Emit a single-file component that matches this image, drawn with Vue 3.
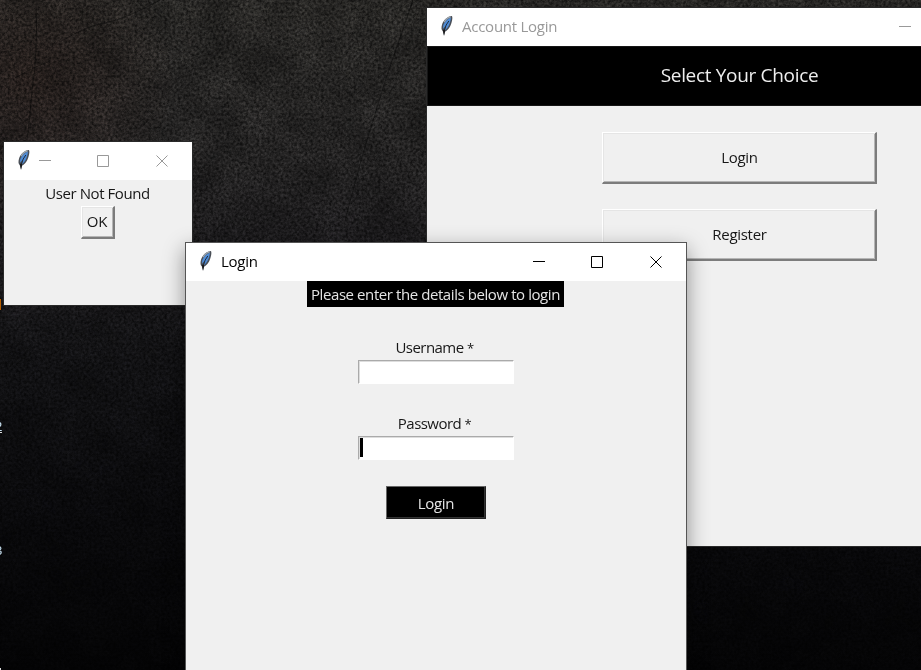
<script setup>
import { h } from 'vue'

const Feather = () => h('svg', { class: 'feather', width: 14, height: 22, viewBox: '0 0 14 22' }, [
  h('path', { d: 'M11.9 1C7.5 1.2 3.3 5.2 2 9.8C1.2 12.6 1.3 15.2 2.8 16.2L4 20.8L5 16.7C8.5 15.2 10.7 11 11.7 7C12.4 4.5 12.7 2 11.9 1Z', fill: '#4a4f57' }),
  h('path', { d: 'M11 2.7C7.5 3.3 4.5 7 3.2 10.5L3 13.8L5.7 10.7L5 15.2C8 13.1 10.3 8.5 11 2.7Z', fill: '#4f8bd4' }),
  h('path', { d: 'M10.7 1.8C7.4 2.5 5.2 5 4.2 7.2', fill: 'none', stroke: '#a0a8b0', 'stroke-width': 1.2 }),
  h('path', { d: 'M8.8 6L6.2 10L4.3 15.5', fill: 'none', stroke: '#16202c', 'stroke-width': .9 }),
  h('path', { d: 'M2.9 14.5L4 20.8L5.2 15.5Z', fill: '#151515' }),
])

const Controls = () => h('div', { class: 'controls' }, [
  'M22 18.5H34', 'M22.5 13.5H33.5V24.5H22.5Z', 'M23.5 13.5L34.5 24.5M34.5 13.5L23.5 24.5',
].map((d) => h('svg', { width: 58, height: 38, viewBox: '0 0 58 38' }, [
  h('path', { d: d, fill: 'none', stroke: 'currentColor', 'stroke-width': 1 }),
])))
</script>

<template>
  <main class="desktop">
    <svg class="wallpaper" width="921" height="670">
      <defs>
        <filter id="grain" x="0" y="0" width="100%" height="100%" color-interpolation-filters="sRGB">
          <feTurbulence type="fractalNoise" baseFrequency="0.37" numOctaves="4" seed="8" />
          <feColorMatrix type="matrix" values="1.6 .5 0 0 -.55  1.6 .5 0 0 -.55  1.6 .5 0 0 -.55  0 0 0 0 1" />
        </filter>
        <filter id="clouds" x="0" y="0" width="100%" height="100%" color-interpolation-filters="sRGB">
          <feTurbulence type="fractalNoise" baseFrequency="0.025" numOctaves="3" seed="21" />
          <feColorMatrix type="matrix" values="1.3 0 0 0 -.15  1.3 0 0 0 -.15  1.3 0 0 0 -.15  0 0 0 0 1" />
        </filter>
        <linearGradient id="shade" x2="0" y2="1">
          <stop offset="0" stop-color="#262523" />
          <stop offset=".24" stop-color="#222121" />
          <stop offset=".38" stop-color="#1a191b" />
          <stop offset=".55" stop-color="#101012" />
          <stop offset=".78" stop-color="#08080a" />
          <stop offset="1" stop-color="#030304" />
        </linearGradient>
        <radialGradient id="warm">
          <stop offset="0" stop-color="#2a1009" stop-opacity=".25" />
          <stop offset="1" stop-color="#2a1009" stop-opacity="0" />
        </radialGradient>
      </defs>
      <rect width="921" height="670" fill="url(#shade)" />
      <ellipse cx="30" cy="80" rx="150" ry="150" fill="url(#warm)" />
      <rect class="clouds" width="921" height="670" filter="url(#clouds)" />
      <rect class="grain" width="921" height="670" filter="url(#grain)" />
      <path class="scratch" d="M413 0C398 45 388 70 380 98C370 130 361 158 344 225M36 0Q38 55 32 90Q30 118 27 141M15 78Q34 67 50 61M60 42Q88 25 105 23Q128 18 160 0" />
    </svg>

    <span class="edge-mark orange"></span>
    <span class="edge-number second">2</span>
    <span class="edge-number third">3</span>
    <span class="edge-mark bottom"></span>

    <section class="window account inactive">
      <header class="titlebar"><Feather /><h1>Account Login</h1><Controls /></header>
      <div class="banner"><span>Select Your Choice</span></div>
      <div class="choices">
        <button class="raised">Login</button>
        <button class="raised">Register</button>
      </div>
    </section>

    <section class="window notice inactive">
      <header class="titlebar"><Feather /><Controls /></header>
      <p class="message">User Not Found</p>
      <button class="raised ok">OK</button>
    </section>

    <section class="window login">
      <header class="titlebar"><Feather /><h1>Login</h1><Controls /></header>
      <form class="form" @submit.prevent>
        <p class="instructions"><span>Please enter the details below to login</span></p>
        <label class="field"><span>Username <small>*</small></span><input type="text" /></label>
        <label class="field password"><span>Password <small>*</small></span><span class="entry"><i></i></span></label>
        <button class="submit">Login</button>
      </form>
    </section>
  </main>
</template>

<style>
body { margin: 0; overflow: hidden; }
.feather { flex: none; margin: 7px 0 0 13px; }
.controls { display: flex; margin-left: auto; flex: none; padding-right: 1px; }
.controls svg { display: block; flex: none; }
</style>

<style scoped>
.desktop { position: relative; width: 921px; height: 670px; overflow: hidden; font: 15px/20px "Open Sans", "Noto Sans", sans-serif; color: #171717; background: #111; }
.wallpaper { display: block; }
.clouds { mix-blend-mode: overlay; opacity: .25; }
.grain { mix-blend-mode: overlay; opacity: .5; }
.scratch { fill: none; stroke: #080808; stroke-width: 1; opacity: .5; }
.window { position: absolute; display: flex; flex-direction: column; align-items: stretch; background: #f0f0f0; box-sizing: border-box; }
.account { left: 427px; top: 8px; width: 625px; height: 538px; box-shadow: 0 0 0 1px #292929; }
.notice { left: 4px; top: 142px; width: 188px; height: 163px; box-shadow: 0 0 0 1px #292929; }
.login { left: 186px; top: 243px; width: 500px; height: 500px; box-shadow: 0 0 0 1px #555, 0 7px 20px 1px rgba(0, 0, 0, .42); }
.titlebar { display: flex; height: 38px; flex: none; background: #fff; color: #000; }
.inactive .titlebar { color: #999; }
h1 { margin: 8px 0 0 8px; font: 400 15px/20px "Open Sans", sans-serif; letter-spacing: -.25px; white-space: nowrap; }
.login .controls, .account .controls { padding-right: 0.5px; margin-right: .5px; }
.notice .controls { margin-left: -14px; }
.banner { height: 60px; box-sizing: border-box; border: 1px solid #161616; padding-bottom: 2px; background: #000; color: #eee; display: flex; align-items: center; justify-content: center; font-size: 19px; letter-spacing: -.32px; }
.choices { display: flex; flex-direction: column; align-items: center; gap: 25px; padding-top: 26px; }
button { font: inherit; color: inherit; padding: 0; margin: 0; border-radius: 0; box-sizing: border-box; letter-spacing: -.3px; }
.raised { width: 275px; height: 52px; background: #f0f0f0; border-style: solid; border-width: 1px 2px 2px 1px; border-color: #fff #7c7c7c #7c7c7c #fff; box-shadow: inset 1px 1px #e5e5e5, inset -1px -1px #b5b5b5; }
.choices .raised { padding: 0 0 1px 1px; }
.message { margin: 3px 1px 3px 0; height: 20px; text-align: center; letter-spacing: -.42px; }
.raised.ok { width: 34px; height: 33px; padding-bottom: 2px; align-self: center; margin-right: 1px; }
.form { display: flex; flex-direction: column; align-items: center; }
.instructions { margin: 0 1px 0 0; width: 257px; height: 26px; line-height: 27px; background: #000; color: #e4e4e4; text-align: center; white-space: nowrap; letter-spacing: -.42px; }
.field { display: flex; flex-direction: column; align-items: center; margin-top: 30px; letter-spacing: -.54px; }
.field > span:first-child { height: 23px; line-height: 20px; margin-right: 3px; }
small { font-size: 13px; line-height: 1; }
.password { margin-top: 29px; }
input, .entry { box-sizing: border-box; width: 156px; height: 24px; background: #fff; border: 1px solid #fff; border-top-color: #aaa; border-left-color: #aaa; box-shadow: inset 1px 1px #ddd; outline: none; padding: 0; margin: 0; }
.entry { display: block; }
.entry i { display: block; width: 3px; height: 19px; margin: 1px; background: #000; }
.submit { width: 100px; height: 33px; margin-top: 26px; color: #e5e5e5; background: #000; border: 1px solid #666; border-right-color: #222; border-bottom-color: #222; box-shadow: inset -1px -1px #333; }
.edge-mark { position: absolute; left: 0; width: 1px; height: 11px; background: #b65d00; }
.orange { top: 299px; }
.bottom { top: 668px; height: 2px; background: #ddd; }
.edge-number { position: absolute; left: -5px; color: #cbe4f5; font-size: 13px; line-height: 16px; }
.second { top: 420px; border-bottom: 1px solid #ddd; line-height: 12px; }
.third { top: 542px; }
</style>
